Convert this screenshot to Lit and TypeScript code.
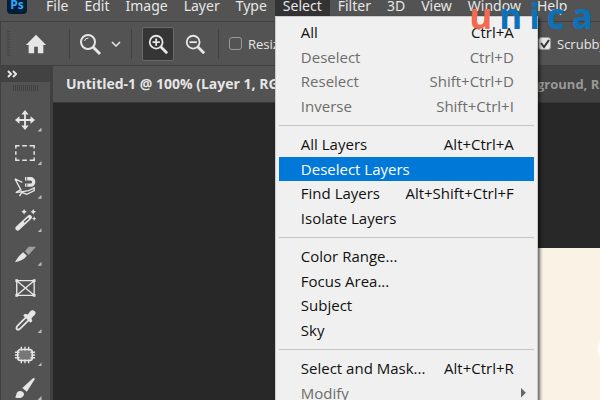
import { LitElement, html, svg, css, nothing } from "lit";
import { customElement } from "lit/decorators.js";
import { classMap } from "lit/directives/class-map.js";

interface Entry { label: string; keys?: string; off?: boolean; on?: boolean; sub?: boolean; }

const groups: Entry[][] = [
  [
    { label: "All", keys: "Ctrl+A" },
    { label: "Deselect", keys: "Ctrl+D", off: true },
    { label: "Reselect", keys: "Shift+Ctrl+D", off: true },
    { label: "Inverse", keys: "Shift+Ctrl+I", off: true },
  ],
  [
    { label: "All Layers", keys: "Alt+Ctrl+A" },
    { label: "Deselect Layers", on: true },
    { label: "Find Layers", keys: "Alt+Shift+Ctrl+F" },
    { label: "Isolate Layers" },
  ],
  [
    { label: "Color Range..." },
    { label: "Focus Area..." },
    { label: "Subject" },
    { label: "Sky" },
  ],
  [
    { label: "Select and Mask...", keys: "Alt+Ctrl+R" },
    { label: "Modify", off: true, sub: true },
  ],
];

const menus = ["File", "Edit", "Image", "Layer", "Type", "Select", "Filter", "3D", "View", "Window", "Help"];

const tools = [
  { name: "Move", art: svg`<path d="M12 4v16M4 12h16" stroke-width="2"/><path d="M12 1l4 5H8zM12 23l4-5H8zM1 12l5-4v8zM23 12l-5-4v8z" fill="currentColor" stroke="none"/>` },
  { name: "Marquee", art: svg`<path d="M2 7V4h4M9 4h5M17 4h5v3M22 10v4M22 17v3h-5M14 20H9M6 20H2v-3M2 14v-4" stroke-width="1.6"/>` },
  { name: "Magnetic lasso", art: svg`<path d="M1 3l8 4M1 3l7 13M9 17l7-1 6-3v3l-8 4-5-2M9 17l-7 1 5-3M9 17l-3 5" stroke-width="1.500"/><path d="M12 3h6a3 3 0 0 1 0 7h-6" stroke-width="3.600"/><path d="M14 0v5M14 8v5" stroke="#535353" stroke-width="1"/>` },
  { name: "Magic wand", art: svg`<path d="M4 21L17 9" stroke-width="5" stroke-linecap="round"/><path d="M11 14.500l5-4.500" stroke="#535353" stroke-width="1.600"/><path d="M11 0l1 2 2 1-2 1-1 2-1-2-2-1 2-1zM21 0l1 2 2 1-2 1-1 2-1-2-2-1 2-1zM22 8l.8 1.700 1.700.8-1.700.8-.8 1.700-.8-1.700-1.700-.8 1.700-.8z" fill="currentColor" stroke="none"/>` },
  { name: "Slice", art: svg`<path d="M1 21c3-5 6-9 9-11l4 4c-3 4-7 6-13 7z" fill="currentColor" stroke="none"/><path d="M12 9l4-5h8l-8 9z" fill="#a0a0a0" stroke="none"/>` },
  { name: "Frame", art: svg`<path d="M3 4h19v16H3zM3 4l19 16M22 4L3 20" stroke-width="1.500"/><path d="M1.500 2.500h3v3h-3zM20.500 2.500h3v3h-3zM1.500 18.500h3v3h-3zM20.500 18.500h3v3h-3z" fill="currentColor" stroke="none"/>` },
  { name: "Eyedropper", art: svg`<path d="M13 8L4 17c-3 4 0 6 3 3l9-9" stroke-width="1.900"/><path d="M15 5l3-4c3-2 7 1 5 4l-4 4 1 3-2 2-8-8 2-2z" fill="currentColor" stroke="none"/>` },
  { name: "Patch", art: svg`<rect x="4" y="6" width="16" height="12" rx="3" fill="#777" stroke-width="1.700"/><path d="M8 3v4M12 3v4M16 3v4M8 17v4M12 17v4M16 17v4M1 9h5M1 12h4M1 15h5M18 9h5M19 12h4M18 15h5" stroke-width="1.500"/>` },
  { name: "Brush", art: svg`<path d="M9 12L21 1l2 1-9 14z" fill="currentColor" stroke="none"/><path d="M1 22c2-1 1-4 3-6 3-2 7 0 7 3-1 4-6 5-10 3z" fill="currentColor" stroke="none"/>` },
];

const lens = (inner: unknown) => html`<svg viewBox="0 0 24 24" class="glyph">
  <circle cx="10" cy="10" r="7"/><path d="M15 15l7 7" stroke-width="3"/>${inner}</svg>`;

@customElement("app-root")
export class AppRoot extends LitElement {
  static styles = css`
    :host { display: block; height: 100vh; overflow: hidden; background: #282828; color: #e6e6e6; font: 15px/20px "Open Sans", "Noto Sans", sans-serif; }
    * { box-sizing: border-box; }
    button { all: unset; box-sizing: border-box; cursor: default; }
    svg { display: block; fill: none; stroke: currentColor; }
    .app { display: flex; flex-direction: column; height: 100%; position: relative; }
    .bar { display: flex; background: #535353; height: 22px; border-bottom: 1px solid #404040; padding-left: 7px; font: 14px/20px "Noto Sans", sans-serif; flex: none; }
    .ps { width: 20px; height: 14px; background: #001e36; color: #31a8ff; border-radius: 0 0 4px 4px; font: bold 12px/10px "Open Sans", sans-serif; text-align: center; margin-right: 11px; }
    .item { position: relative; height: 16px; }
    .title { display: block; height: 16px; line-height: 12px; padding: 0 8px 4px; white-space: nowrap; }
    .open .title { background: #333; }
    .menu { position: absolute; z-index: 2; top: 16px; left: 0; width: 263px; padding: 3px; background: #f0f0f0; border: 1px solid #ccc; box-shadow: 2px 2px 3px #0009; color: #111; font: 15px/20px "Open Sans", "Noto Sans", sans-serif; }
    .group { display: grid; grid-auto-rows: 1fr; height: 98px; }
    .group:last-child { height: 49px; }
    .group + .group { margin-top: 14px; position: relative; }
    .group + .group::before { content: ""; position: absolute; top: -7px; left: 0; right: 0; border-top: 1px solid #c3c3c3; }
    .entry { display: flex; align-items: center; justify-content: space-between; padding: 0 20px 0 22px; white-space: nowrap; }
    .off { color: #6d6d6d; }
    .on { background: #0078d7; color: #fff; }
    .arrow { width: 5px; height: 10px; margin-right: -12px; background: #666; clip-path: polygon(0 0, 100% 50%, 0 100%); }
    .options { display: flex; align-items: center; height: 44px; background: #535353; border-bottom: 1px solid #404040; border-left: 1px solid #404040; flex: none; padding-left: 6px; }
    .handle { width: 3px; height: 26px; margin-right: 15px; background: repeating-linear-gradient(#454545 0 1px, #535353 1px 2px); }
    .glyph { width: 24px; height: 24px; stroke-width: 2; }
    .home .glyph { width: 22px; height: 22px; }
    .rule { width: 1px; height: 30px; background: #404040; }
    .home { margin-right: 22px; }
    .find { margin: 0 9px 0 8px; }
    .chev { width: 10px; height: 6px; margin-right: 10px; }
    .zoomin { width: 32px; height: 34px; background: #353535; border: 1px solid #6a6a6a; border-radius: 2px; display: grid; place-items: center; margin: 0 10px; }
    .zoomin svg, .zoomout svg { width: 22px; height: 22px; }
    .zoomout { margin-right: 12px; }
    .check { display: flex; align-items: center; gap: 6px; font-size: 13px; white-space: nowrap; margin-left: 10px; }
    .check input { appearance: none; width: 13px; height: 13px; margin: 0; border: 1px solid #999; border-radius: 3px; flex: none; }
    .check input:checked { background: #e6e6e6; }
    .scrub { margin-left: auto; width: 62px; position: relative; overflow: hidden; }
    .tick { position: absolute; left: 2px; width: 10px; height: 13px; color: #333; }
    .main { display: flex; flex: 1; min-height: 0; }
    .rail { width: 53px; flex: none; background: #535353; border: solid #404040; border-width: 0 3px 0 1px; display: flex; flex-direction: column; align-items: center; }
    .more { align-self: stretch; height: 16px; background: #424242; padding: 4px 6px; flex: none; }
    .more svg { width: 10px; height: 8px; stroke-width: 2; }
    .grip { width: 26px; height: 6px; margin: 3px 0 12px; background: repeating-linear-gradient(90deg, #404040 0 1px, #535353 1px 2px); flex: none; }
    .tools { display: grid; grid-auto-rows: 1fr; height: 302px; flex: none; margin-right: 2px; }
    .tool { position: relative; width: 34px; display: grid; place-items: center; }
    .tool svg { width: 22px; height: 22px; }
    .tool::after { content: ""; position: absolute; right: 0; bottom: 5px; width: 4px; height: 4px; background: #bbb; clip-path: polygon(100% 0, 100% 100%, 0 100%); }
    .plain::after { display: none; }
    .doc { flex: 1; display: flex; flex-direction: column; min-width: 0; }
    .tabs { display: flex; justify-content: space-between; height: 37px; background: #424242; line-height: 36px; font-size: 14px; font-weight: bold; white-space: nowrap; flex: none; border-bottom: 1px solid #383838; }
    .tab { padding-left: 13px; background: #535353; width: 260px; overflow: hidden; }
    .idle { color: #999; width: 63px; overflow: hidden; font-size: 13px; }
    .paper { flex: 1; background: radial-gradient(ellipse 3px 10px at 100% 101px, #fff 20%, #fbf2e600) #fbf2e6; margin: 145px 0 0 auto; width: 62px; }
    .brand { position: absolute; z-index: 3; top: 0; right: 7px; display: flex; gap: 7px; color: #0b71b9; font: bold 35px/32px "Open Sans", sans-serif; }
    .u { color: #f26b4e; }
  `;

  private entry(e: Entry) {
    return html`<button role="menuitem" ?disabled=${!!e.off} class=${classMap({ entry: true, off: !!e.off, on: !!e.on })}>
      <span>${e.label}</span>${e.keys ? html`<span>${e.keys}</span>` : nothing}${e.sub ? html`<span class="arrow"></span>` : nothing}
    </button>`;
  }

  render() {
    return html`<div class="app">
      <nav class="bar">
        <div class="ps">Ps</div>
        ${menus.map((m) => html`<div class=${classMap({ item: true, open: m === "Select" })}>
          <button class="title">${m}</button>
          ${m === "Select" ? html`<div class="menu" role="menu">${groups.map((g) => html`<div class="group">${g.map((e) => this.entry(e))}</div>`)}</div>` : nothing}
        </div>`)}
      </nav>
      <div class="brand"><span class="u">u</span><span>n</span><span>i</span><span>c</span><span>a</span></div>
      <div class="options">
        <div class="handle"></div>
        <button class="home" aria-label="Home"><svg class="glyph" viewBox="0 0 24 24"><path d="M12 2L1 13h3v9h6v-7h4v7h6v-9h3z" fill="currentColor" stroke="none"/></svg></button>
        <div class="rule"></div>
        <button class="find" aria-label="Zoom tool">${lens(svg`<path d="M6.500 9a4 4 0 0 1 4-3" stroke-width="1"/>`)}</button>
        <svg class="chev" viewBox="0 0 10 6"><path d="M1 1l4 4 4-4" stroke-width="1.500"/></svg>
        <div class="rule"></div>
        <button class="zoomin" aria-label="Zoom in">${lens(svg`<path d="M10 6v8M6 10h8"/>`)}</button>
        <button class="zoomout" aria-label="Zoom out">${lens(svg`<path d="M6 10h8"/>`)}</button>
        <div class="rule"></div>
        <label class="check"><input type="checkbox">Resize</label>
        <label class="check scrub"><input type="checkbox" checked><svg class="tick" viewBox="0 0 10 13"><path d="M1 6l3 4 5-7" stroke-width="2"/></svg>Scrubby</label>
      </div>
      <div class="main">
        <aside class="rail">
          <button class="more" aria-label="Expand"><svg viewBox="0 0 10 8"><path d="M1 1l3 3-3 3M6 1l3 3-3 3"/></svg></button>
          <div class="grip"></div>
          <div class="tools">${tools.map((t) => html`<button class=${classMap({ tool: true, plain: t.name === "Frame" })} aria-label=${t.name}><svg viewBox="0 0 24 24">${t.art}</svg></button>`)}</div>
        </aside>
        <section class="doc">
          <div class="tabs"><div class="tab">Untitled-1 @ 100% (Layer 1, RGB/8)</div><div class="idle">ground, RGB</div></div>
          <div class="paper"></div>
        </section>
      </div>
    </div>`;
  }
}
